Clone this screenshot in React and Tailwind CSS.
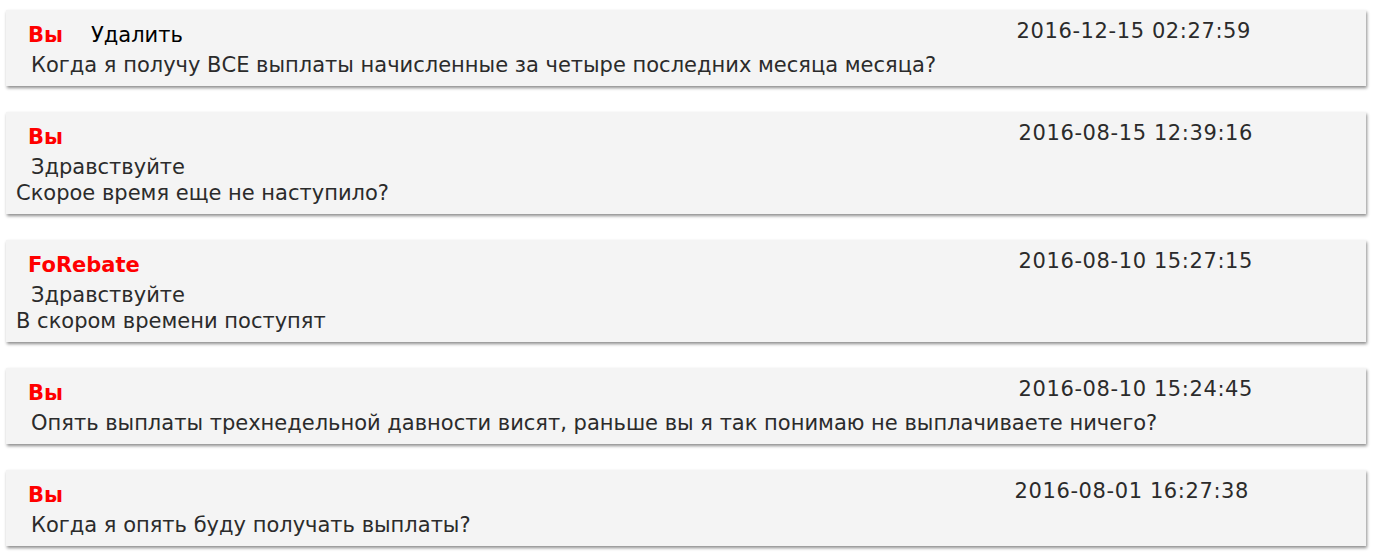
import React from "react";

const items = [
  { name: "Вы", del: true, pr: "pr-[115px]", date: "2016-12-15 02:27:59", first: "Когда я получу ВСЕ выплаты начисленные за четыре последних месяца месяца?", rest: null },
  { name: "Вы", pr: "pr-[113px]", date: "2016-08-15 12:39:16", first: "Здравствуйте", rest: "Скорое время еще не наступило?" },
  { name: "FoRebate", pr: "pr-[113px]", date: "2016-08-10 15:27:15", first: "Здравствуйте", rest: "В скором времени поступят" },
  { name: "Вы", pr: "pr-[113px]", date: "2016-08-10 15:24:45", first: "Опять выплаты трехнедельной давности висят, раньше вы я так понимаю не выплачиваете ничего?", rest: null },
  { name: "Вы", pr: "pr-[117px]", date: "2016-08-01 16:27:38", first: "Когда я опять буду получать выплаты?", rest: null },
];

export default function App() {
  return (
    <div className="bg-white min-h-[554px] pt-[10px] pl-[6px] pr-[8px]" style={{ fontFamily: '"DejaVu Sans", Verdana, sans-serif' }}>
      {items.map((it, i) => (
        <div key={i} className="bg-[#f4f4f4] shadow-[1px_2px_3px_rgba(0,0,0,0.45)] mb-[26px] pb-[8px] text-[21px] leading-[26px] text-[#2b2b2b]">
          <div className={"flex items-start justify-between pt-[12px] pl-[22px] " + it.pr}>
            <div className="flex items-baseline">
              <span className="text-[#ff0000] font-bold">{it.name}</span>
              {it.del && <span className="ml-[28px] text-black">Удалить</span>}
            </div>
            <span className="-mt-[4px] tracking-[0.6px]">{it.date}</span>
          </div>
          <div className="pl-[10px] mt-[4px]">
            <div className="pl-[15px]">{it.first}</div>
            {it.rest && <div>{it.rest}</div>}
          </div>
        </div>
      ))}
    </div>
  );
}
